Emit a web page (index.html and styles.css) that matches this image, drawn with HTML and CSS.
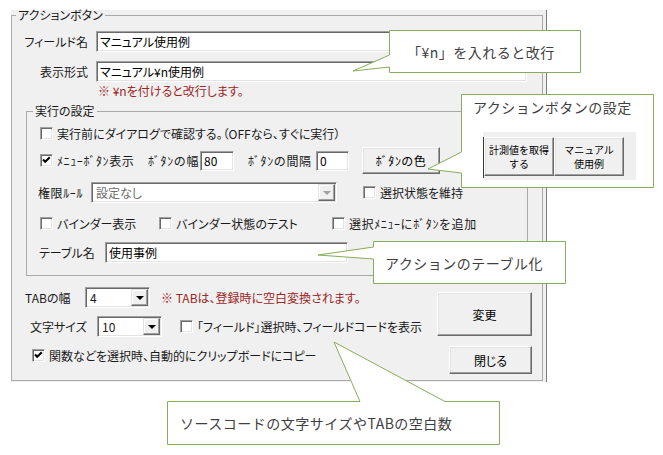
FILE: index.html
```html
<!DOCTYPE html>
<html lang="ja">
<head>
  <meta charset="UTF-8">
  <meta name="viewport" content="width=device-width, initial-scale=1.0">
  <title>アクションボタンの設定</title>
  <link rel="stylesheet" href="styles.css">
</head>
<body>
  <div class="stage">
    <div class="window">
      <fieldset class="group outer">
        <legend>アクションボタン</legend>

        <div class="row text-row">
          <span class="lbl">フィールド名</span>
          <input class="field wide" type="text" value="マニュアル使用例">
        </div>
        <div class="row text-row">
          <span class="lbl">表示形式</span>
          <input class="field wide" type="text" value="マニュアル¥n使用例">
        </div>
        <p class="hint">※ ¥nを付けると改行します。</p>

        <fieldset class="group inner">
          <legend>実行の設定</legend>

          <div class="row r-confirm">
            <span class="cb"><span class="box"></span>実行前にダイアログで確認する。（OFFなら、すぐに実行）</span>
          </div>

          <div class="row r-menu">
            <span class="cb w-menu hw"><span class="box"><svg class="tick" viewBox="0 0 11 11"><path d="M2 4.5l2.2 2.3L8.8 2.2"/></svg></span>ﾒﾆｭｰﾎﾞﾀﾝ表示</span>
            <span class="l-width hw">ﾎﾞﾀﾝの幅</span>
            <input class="field num-w" type="text" value="80">
            <span class="l-gap hw">ﾎﾞﾀﾝの間隔</span>
            <input class="field num-g" type="text" value="0">
            <button class="btn btn-color hw">ﾎﾞﾀﾝの色</button>
          </div>

          <div class="row r-rule">
            <span class="l-rule hw">権限ﾙｰﾙ</span>
            <div class="combo c-rule disabled"><span class="val">設定なし</span><span class="drop"></span></div>
            <span class="cb keep"><span class="box"></span>選択状態を維持</span>
          </div>

          <div class="row r-binder">
            <span class="cb w-binder"><span class="box"></span>バインダー表示</span>
            <span class="cb w-test"><span class="box"></span>バインダー状態のテスト</span>
            <span class="cb hw"><span class="box"></span>選択ﾒﾆｭｰにﾎﾞﾀﾝを追加</span>
          </div>

          <div class="row r-table">
            <span class="l-table">テーブル名</span>
            <input class="field tbl" type="text" value="使用事例">
          </div>
        </fieldset>

        <div class="bottom">
          <div class="opts">
            <div class="row r-tab">
              <span class="l-tab">TABの幅</span>
              <div class="combo c-small"><span class="val">4</span><span class="drop"></span></div>
              <span class="hint-inline">※ TABは、登録時に空白変換されます。</span>
            </div>
            <div class="row r-size">
              <span class="l-size">文字サイズ</span>
              <div class="combo c-small"><span class="val">10</span><span class="drop"></span></div>
              <span class="cb fieldcode"><span class="box"></span>「フィールド」選択時、フィールドコードを表示</span>
            </div>
            <div class="row r-clip">
              <span class="cb"><span class="box"><svg class="tick" viewBox="0 0 11 11"><path d="M2 4.5l2.2 2.3L8.8 2.2"/></svg></span>関数などを選択時、自動的にクリップボードにコピー</span>
            </div>
          </div>
          <div class="actions">
            <button class="btn btn-ok">変更</button>
            <button class="btn btn-close">閉じる</button>
          </div>
        </div>
      </fieldset>
    </div>

    <!-- callouts -->
    <div class="callout c-newline">
      <svg class="shape" width="192" height="43"><path d="M0.5 0.5H191.5V42.5H0.5V37L-36 41L0.5 25Z"/></svg>
      <span class="txt">「¥n」を入れると改行</span>
    </div>

    <div class="callout c-action">
      <svg class="shape" width="193" height="94"><path d="M0.5 0.5H192.5V93.5H0.5V79L-33 75L0.5 58Z"/></svg>
      <span class="title">アクションボタンの設定</span>
      <div class="strip">
        <div class="btnbar">
          <button class="btn mini"><span>計測値を取得</span><span>する</span></button>
          <button class="btn mini"><span>マニュアル</span><span>使用例</span></button>
        </div>
      </div>
    </div>

    <div class="callout c-table">
      <svg class="shape" width="193" height="43"><path d="M0.5 0.5H192.5V42.5H0.5V18L-55 14L0.5 6Z"/></svg>
      <span class="txt">アクションのテーブル化</span>
    </div>

    <div class="callout c-source">
      <svg class="shape" width="333" height="44"><path d="M0.5 0.5H193L167 -59L278 0.5H332.5V43.5H0.5Z"/></svg>
      <span class="txt">ソースコードの文字サイズやTABの空白数</span>
    </div>
  </div>
</body>
</html>
```

FILE: styles.css
```css
* {
  box-sizing: border-box;
}
body {
  margin: 0;
  background-color: #fff;
  color: #000;
  font-family: "Noto Sans CJK JP", sans-serif;
  font-size: 12px;
}
.stage {
  position: relative;
  width: 663px;
  height: 455px;
  overflow: hidden;
}

/* dialog */
.window {
  display: flow-root;
  margin: 10px 0 0 11px;
  width: 536px;
  height: 372px;
  background-color: #f0f0f0;
  border-right: 1px solid #7d7d7d;
  font-feature-settings: "palt";
  white-space: nowrap;
  color: #1a1a1a;
}
.hw {
  font-feature-settings: normal;
  letter-spacing: 0.6px;
}
.group {
  margin: 0;
  padding: 0;
  min-width: 0;
  border: 1px solid #a9a9a9;
}
.group legend {
  padding: 0 2px;
  line-height: 14px;
}
.outer {
  margin-top: -2px;
  width: 532px;
  padding-bottom: 6px;
}
.outer > legend {
  margin-left: 4px;
}
.inner {
  margin: 6px 0 0 14px;
  width: 502px;
  padding-bottom: 12px;
}
.inner > legend {
  margin-left: 6px;
}
.row {
  display: flex;
  align-items: center;
}
.text-row {
  height: 21px;
  margin-top: 9px;
}
.lbl {
  width: 76px;
  margin-right: 8px;
  text-align: right;
}
.hint {
  margin: 2px 0 0 86px;
  line-height: 14px;
  color: #9c2626;
}
.hint-inline {
  margin-left: 11px;
  color: #9c2626;
}

/* controls */
.field {
  height: 21px;
  margin: 0;
  padding: 0 3px;
  font: inherit;
  color: #000;
  background-color: #fff;
  border: 1px solid;
  border-color: #a0a0a0 #fff #fff #a0a0a0;
  box-shadow: inset 1px 1px 0 #696969, inset -1px -1px 0 #e3e3e3;
  outline: none;
}
.wide {
  width: 431px;
}
.btn {
  margin: 0;
  padding: 0;
  font: inherit;
  color: #000;
  background-color: #f0f0f0;
  border: 1px solid;
  border-color: #fff #696969 #696969 #fff;
  box-shadow: inset -1px -1px 0 #a0a0a0, inset 1px 1px 0 #e3e3e3;
}
.cb {
  display: flex;
  align-items: center;
}
.box {
  flex: none;
  width: 13px;
  height: 13px;
  margin-right: 4px;
  background-color: #fff;
  border: 1px solid;
  border-color: #a0a0a0 #fff #fff #a0a0a0;
  box-shadow: inset 1px 1px 0 #696969, inset -1px -1px 0 #e3e3e3;
}
.tick {
  display: block;
  width: 11px;
  height: 11px;
}
.tick path {
  fill: none;
  stroke: #000;
  stroke-width: 2;
}
.combo {
  display: flex;
  align-items: center;
  height: 21px;
  padding-left: 4px;
  background-color: #fff;
  border: 1px solid;
  border-color: #a0a0a0 #fff #fff #a0a0a0;
  box-shadow: inset 1px 1px 0 #696969, inset -1px -1px 0 #e3e3e3;
}
.combo .val {
  flex: 1;
}
.combo .drop {
  display: flex;
  align-items: center;
  justify-content: center;
  width: 17px;
  height: 17px;
  margin-right: 1px;
  background-color: #f0f0f0;
  border: 1px solid;
  border-color: #e3e3e3 #696969 #696969 #e3e3e3;
  box-shadow: inset -1px -1px 0 #a0a0a0, inset 1px 1px 0 #fff;
}
.combo .drop::after {
  content: "";
  border-left: 4px solid transparent;
  border-right: 4px solid transparent;
  border-top: 4px solid #000;
}
.combo.disabled .val {
  color: #6d6d6d;
}
.combo.disabled .drop::after {
  border-top-color: #a0a0a0;
}

/* inner group rows */
.r-confirm {
  height: 20px;
  margin: 5px 0 0 13px;
}
.r-menu {
  height: 27px;
  margin: 4px 0 0 13px;
}
.w-menu {
  width: 108px;
}
.l-width {
  width: 52px;
}
.num-w {
  width: 34px;
  height: 20px;
}
.l-gap {
  width: 82px;
  padding-left: 14px;
}
.num-g {
  width: 33px;
  height: 20px;
}
.btn-color {
  width: 78px;
  height: 27px;
  margin-left: 13px;
}
.r-rule {
  height: 21px;
  margin: 8px 0 0 11px;
}
.l-rule {
  width: 53px;
}
.c-rule {
  width: 246px;
}
.keep {
  margin-left: 26px;
}
.r-binder {
  height: 20px;
  margin: 10px 0 0 13px;
}
.w-binder {
  width: 119px;
}
.w-test {
  width: 173px;
}
.r-table {
  height: 21px;
  margin: 9px 0 0 12px;
}
.l-table {
  width: 66px;
}
.tbl {
  width: 243px;
}

/* bottom area */
.bottom {
  display: flex;
  justify-content: space-between;
}
.r-tab {
  height: 21px;
  margin: 11px 0 0 13px;
}
.l-tab {
  width: 60px;
}
.c-small {
  width: 65px;
}
.r-size {
  height: 21px;
  margin: 8px 0 0 18px;
}
.l-size {
  width: 67px;
}
.fieldcode {
  margin-left: 18px;
}
.r-clip {
  height: 20px;
  margin: 8px 0 0 20px;
}
.actions {
  display: flex;
  flex-direction: column;
  align-items: flex-end;
  margin: 16px 10px 0 0;
}
.btn-ok {
  width: 95px;
  height: 44px;
}
.btn-close {
  width: 83px;
  height: 28px;
  margin-top: 10px;
}

/* callouts */
.callout {
  position: absolute;
  z-index: 2;
  font-size: 14px;
  letter-spacing: 0.5px;
  color: #404040;
  white-space: nowrap;
}
.callout .shape {
  position: absolute;
  left: 0;
  top: 0;
  overflow: visible;
}
.callout .shape path {
  fill: #fff;
  stroke: #86ad5d;
}
.callout .txt {
  position: relative;
}
.c-newline {
  left: 389px;
  top: 30px;
  width: 192px;
  height: 43px;
  display: flex;
  align-items: center;
  padding-left: 18px;
}
.c-action {
  left: 461px;
  top: 94px;
  width: 193px;
  height: 94px;
}
.c-action .title {
  position: relative;
  display: block;
  margin: 4px 0 0 12px;
  line-height: 18px;
}
.strip {
  position: relative;
  width: 153px;
  height: 48px;
  margin: 16px 0 0 22px;
  padding-top: 5px;
  background-color: #efefef;
}
.btnbar {
  display: flex;
  height: 41px;
  border-left: 1px solid #3a3a3a;
}
.mini {
  display: flex;
  flex-direction: column;
  align-items: center;
  justify-content: center;
  gap: 3px;
  width: 70px;
  height: 39px;
  font-size: 10px;
  line-height: 11px;
  letter-spacing: 0;
}
.c-table {
  left: 373px;
  top: 241px;
  width: 193px;
  height: 43px;
  display: flex;
  align-items: center;
  padding-left: 12px;
}
.c-source {
  left: 167px;
  top: 401px;
  width: 333px;
  height: 44px;
  display: flex;
  align-items: center;
  padding-left: 13px;
}
```
